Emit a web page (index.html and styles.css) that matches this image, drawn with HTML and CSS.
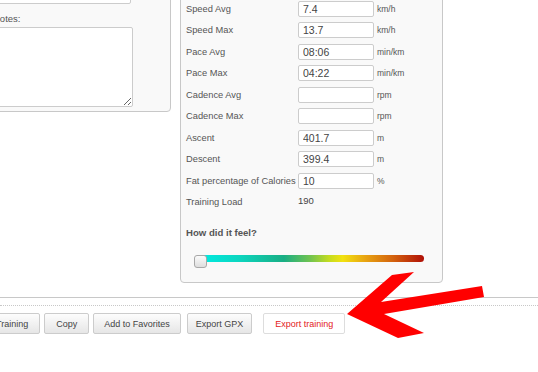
FILE: index.html
```
<!doctype html>
<html lang="en">
  <head>
    <meta charset="UTF-8" />
    <meta name="viewport" content="width=device-width, initial-scale=1.0" />
    <title>Edit Training</title>
    <link rel="stylesheet" href="styles.css">
  </head>
  <body>
    <div class="page">
      <div class="columns">
        <div class="panel notes-panel">
          <input type="text" class="field wide-field" />
          <label class="notes-label">Notes:</label>
          <textarea class="notes-area"></textarea>
        </div>

        <div class="panel stats-panel">
          <div class="stat-row">
            <span class="stat-label">Speed Avg</span>
            <input type="text" class="field" value="7.4" />
            <span class="unit">km/h</span>
          </div>
          <div class="stat-row">
            <span class="stat-label">Speed Max</span>
            <input type="text" class="field" value="13.7" />
            <span class="unit">km/h</span>
          </div>
          <div class="stat-row">
            <span class="stat-label">Pace Avg</span>
            <input type="text" class="field" value="08:06" />
            <span class="unit">min/km</span>
          </div>
          <div class="stat-row">
            <span class="stat-label">Pace Max</span>
            <input type="text" class="field" value="04:22" />
            <span class="unit">min/km</span>
          </div>
          <div class="stat-row">
            <span class="stat-label">Cadence Avg</span>
            <input type="text" class="field" value="" />
            <span class="unit">rpm</span>
          </div>
          <div class="stat-row">
            <span class="stat-label">Cadence Max</span>
            <input type="text" class="field" value="" />
            <span class="unit">rpm</span>
          </div>
          <div class="stat-row">
            <span class="stat-label">Ascent</span>
            <input type="text" class="field" value="401.7" />
            <span class="unit">m</span>
          </div>
          <div class="stat-row">
            <span class="stat-label">Descent</span>
            <input type="text" class="field" value="399.4" />
            <span class="unit">m</span>
          </div>
          <div class="stat-row">
            <span class="stat-label">Fat percentage of Calories</span>
            <input type="text" class="field" value="10" />
            <span class="unit">%</span>
          </div>
          <div class="stat-row">
            <span class="stat-label">Training Load</span>
            <span class="stat-value">190</span>
          </div>

          <h3 class="feel-title">How did it feel?</h3>
          <div class="feel-slider">
            <div class="feel-track"></div>
            <div class="feel-handle"></div>
          </div>
        </div>
      </div>

      <div class="toolbar">
        <div class="rule"></div>
        <div class="actions">
          <button class="btn">Training</button>
          <button class="btn">Copy</button>
          <button class="btn btn-fav">Add to Favorites</button>
          <button class="btn btn-gpx">Export GPX</button>
          <button class="btn btn-export">Export training</button>
        </div>
      </div>

      <!-- annotation arrow pointing at the export button -->
      <svg class="arrow" width="538" height="372" viewBox="0 0 538 372">
        <polygon
          fill="#ff0000"
          points="347,314 392,275 414,272 381,302 482,286 484,297 384,314 424,333 398,338"
        />
      </svg>
    </div>
  </body>
</html>
```

FILE: styles.css
```
body {
  font-family: "Liberation Sans", Arial, sans-serif;
  margin: 0;
  background: #fff;
  color: #555;
  overflow: hidden;
}

.page {
  position: relative;
  display: flow-root;
  width: 538px;
  height: 372px;
}

.columns {
  display: flex;
  align-items: flex-start;
  margin-top: -20px;
}

.panel {
  background: #f9f9f9;
  border: 1px solid #c8c8c8;
  border-radius: 4px;
  box-sizing: border-box;
}

.notes-panel {
  width: 201px;
  margin-left: -30px;
  padding: 8px 8px 4px;
  display: flex;
  flex-direction: column;
}

.field {
  box-sizing: border-box;
  width: 76px;
  height: 16px;
  margin: 0;
  padding: 0 4px;
  border: 1px solid #ccc;
  border-radius: 2px;
  background: #fff;
  font-family: "Liberation Sans", Arial, sans-serif;
  font-size: 10.5px;
  color: #444;
  outline: none;
}

.wide-field {
  width: 152px;
  height: 15px;
}

.notes-label {
  font-size: 9.5px;
  line-height: 12px;
  margin: 9px 0 0 14px;
}

.notes-area {
  box-sizing: border-box;
  width: 154px;
  height: 80px;
  margin: 2px 0 0;
  border: 1px solid #ccc;
  border-radius: 2px;
  background: #fff;
  resize: both;
}

.stats-panel {
  width: 263px;
  margin-left: 9px;
  padding: 17px 0 14px 5px;
}

.stat-row {
  display: flex;
  align-items: center;
  height: 21.5px;
}

.stat-label {
  width: 112px;
  flex-shrink: 0;
  font-size: 9.3px;
  white-space: nowrap;
}

.unit {
  margin-left: 3px;
  font-size: 8.5px;
}

.stat-value {
  font-size: 9.5px;
  color: #444;
  margin-top: -4px;
}

.feel-title {
  margin: 14px 0 0;
  font-size: 9.6px;
  line-height: 12px;
  font-weight: bold;
  color: #555;
}

.feel-slider {
  position: relative;
  width: 230px;
  height: 13px;
  margin: 16px 0 0 8px;
}

.feel-track {
  height: 7px;
  margin: 2px 0 0 4px;
  border-radius: 4px;
  background: linear-gradient(
    to right,
    #00ece4 0%,
    #0cd6c0 18%,
    #19ae84 38%,
    #74c44e 50%,
    #c4dc20 58%,
    #f2e210 64%,
    #e8a412 74%,
    #d4640e 86%,
    #b01008 100%
  );
}

.feel-handle {
  position: absolute;
  top: 0;
  left: 0;
  width: 13px;
  height: 13px;
  box-sizing: border-box;
  border: 1px solid #a8a8a8;
  border-radius: 3px;
  background: linear-gradient(#fbfbfb, #dedede);
}

.toolbar {
  margin-top: 14px;
}

.rule {
  border-top: 1px solid #c8c8c8;
  border-bottom: 1px dotted #c8c8c8;
  height: 7px;
}

.actions {
  display: flex;
  gap: 4px;
  margin: 7px 0 0 -16px;
}

.btn {
  height: 21px;
  padding: 0 11px;
  border: 1px solid #ccc;
  border-radius: 2px;
  background: linear-gradient(#fdfdfd, #e6e6e6);
  font-family: "Liberation Sans", Arial, sans-serif;
  font-size: 9px;
  color: #444;
  cursor: pointer;
}

.btn-fav {
  padding: 0 10px;
}

.btn-gpx {
  margin-left: 2px;
  padding: 0 8px;
}

.btn-export {
  margin-left: 7px;
  padding: 0 11px;
  background: #fff;
  border-color: #ddd;
  color: #e32222;
}

.arrow {
  position: absolute;
  top: 0;
  left: 0;
  pointer-events: none;
}
```
